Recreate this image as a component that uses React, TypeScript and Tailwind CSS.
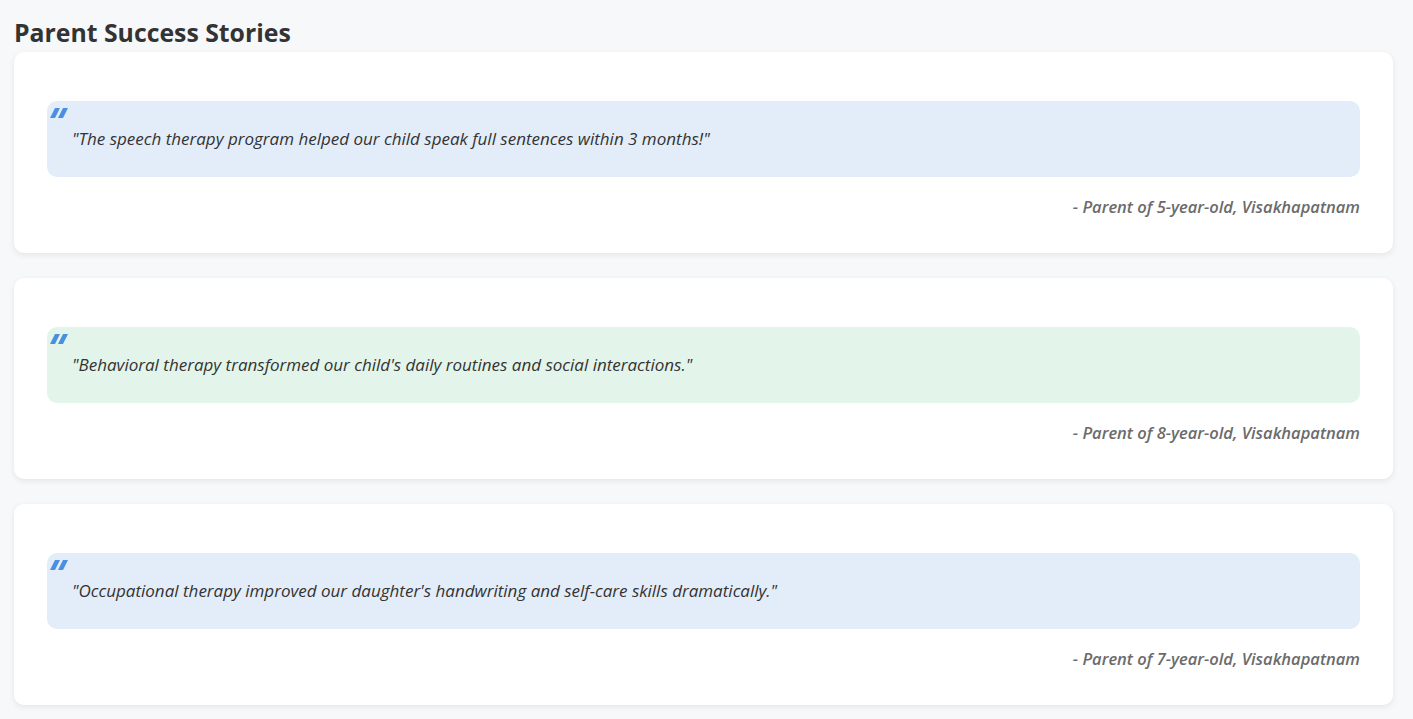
import React from 'react';

const stories = [
  {
    quote: '"The speech therapy program helped our child speak full sentences within 3 months!"',
    author: '- Parent of 5-year-old, Visakhapatnam',
    bg: 'bg-[#e3edf9]',
  },
  {
    quote: '"Behavioral therapy transformed our child\'s daily routines and social interactions."',
    author: '- Parent of 8-year-old, Visakhapatnam',
    bg: 'bg-[#e3f5ea]',
  },
  {
    quote: '"Occupational therapy improved our daughter\'s handwriting and self-care skills dramatically."',
    author: '- Parent of 7-year-old, Visakhapatnam',
    bg: 'bg-[#e3edf9]',
  },
];

function QuoteMark() {
  return (
    <svg width="18" height="11" viewBox="0 0 18 11" className="absolute left-[3px] top-[7px]">
      <polygon points="5,0 10,0 5,10 0,10" fill="#4a90e2" />
      <polygon points="13,0 18,0 13,10 8,10" fill="#4a90e2" />
    </svg>
  );
}

export default function App() {
  return (
    <div className="min-h-screen bg-[#f7f8fa] pl-[14px] pr-[20px] pt-[14px] pb-[14px] font-['Open_Sans',sans-serif] text-[#333]">
      {/* Section title */}
      <h2 className="text-[24.8px] font-bold leading-[36px] text-[#333] mb-[2px]">Parent Success Stories</h2>

      <div className="flex flex-col gap-[25px]">
        {stories.map((s) => (
          <div
            key={s.author}
            className="bg-white rounded-[10px] shadow-[0_2px_6px_rgba(0,0,0,0.08)] px-[33px] pt-[49px] pb-[34px]"
          >
            <div className={`relative ${s.bg} rounded-[10px] px-[25px] py-[25px]`}>
              <QuoteMark />
              <p className="text-[17px] italic font-medium leading-[26px] text-[#333]">{s.quote}</p>
            </div>
            <p className="mt-[18px] text-right text-[16.5px] italic font-semibold leading-[24px] text-[#6b6b6b]">
              {s.author}
            </p>
          </div>
        ))}
      </div>
    </div>
  );
}
